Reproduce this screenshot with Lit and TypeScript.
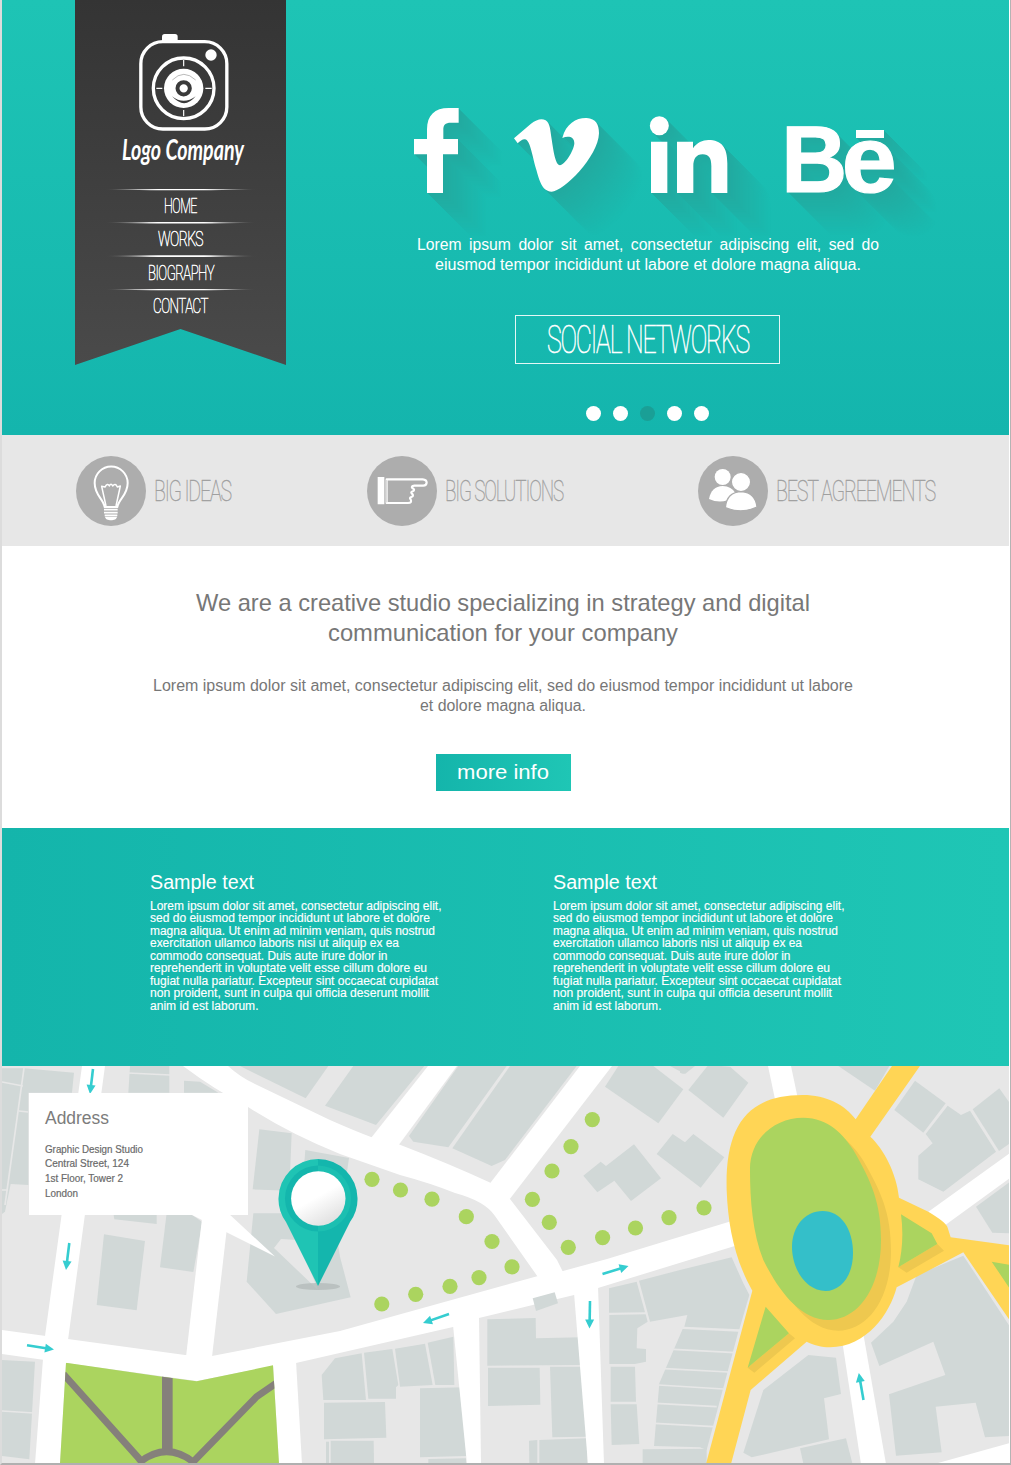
import { LitElement, html, svg, css } from "lit";
import { customElement, property } from "lit/decorators.js";

/* One line of text, fitted to a fixed measure. */
@customElement("fit-text")
class FitText extends LitElement {
  @property() text = "";
  @property({ type: Number }) w = 100;
  @property({ type: Number }) size = 16;
  @property({ type: Number }) lh = 20;
  @property({ type: Number }) ws = 0;

  static styles = css`
    :host { display: block; flex: none; line-height: 0; }
    svg { display: block; overflow: visible; }
    text { fill: currentColor; stroke: currentColor; stroke-width: var(--ink, 0); letter-spacing: var(--track, 0); }
  `;

  render() {
    return html`<svg width=${this.w} height=${this.lh}>
      <text x="0" y=${this.lh / 2 + this.size * 0.355} font-size=${this.size} word-spacing=${this.ws}
        textLength=${this.w} lengthAdjust="spacingAndGlyphs">${this.text}</text>
    </svg>`;
  }
}

const fit = (text: string, w: number, size: number, lh: number, ws = 0) =>
  html`<fit-text text=${text} w=${w} size=${size} lh=${lh} ws=${ws}></fit-text>`;

@customElement("brand-ribbon")
class BrandRibbon extends LitElement {
  static styles = css`
    :host {
      display: block; width: 211px; height: 365px; flex: none; color: #fff;
      background: linear-gradient(#343434, #4a4a4a);
      clip-path: polygon(0 0, 100% 0, 100% 100%, 50% 329px, 0 100%);
    }
    .wrap { display: flex; flex-direction: column; align-items: center; }
    .camera { display: block; margin: 33px 0 0 6px; }
    .name { font-family: Lato, sans-serif; font-style: italic; font-weight: 700; margin: 2px 0 0 4px; }
    .nav { margin-top: 21.500px; font-family: Roboto, sans-serif; font-weight: 100; --ink: 0.55px; --track: -0.04em; }
    .item { display: flex; flex-direction: column; align-items: center; height: 33.4px; width: 152px; }
    .rule { height: 2px; width: 152px; flex: none; background: linear-gradient(90deg, transparent, #fff 35%, #fff 65%, transparent); clip-path: polygon(0 40%, 30% 0, 70% 0, 100% 40%, 70% 85%, 30% 85%); }
    .label { margin-top: 2.500px; }
  `;

  render() {
    const items: [string, number][] = [["HOME", 33], ["WORKS", 45], ["BIOGRAPHY", 66], ["CONTACT", 55]];
    return html`<div class="wrap">
      <svg class="camera" width="90" height="98" viewBox="205 99 270 294">
        <g fill="none" stroke="#fff">
          <rect x="210.500" y="125" width="258" height="262" rx="66" stroke-width="10" />
          <circle cx="339" cy="265" r="91" stroke-width="10" />
          <path d="M339 180V199M339 330V349M257 265H275M404 265H423" stroke-width="3.500" />
        </g>
        <rect x="274" y="102" width="47" height="26" rx="8" fill="#fff" />
        <circle cx="421" cy="165" r="17" fill="#fff" />
        <circle cx="339" cy="265" r="59" fill="#fff" />
        <circle cx="339" cy="265" r="18.500" fill="none" stroke="#3a3a3a" stroke-width="12" />
        <path d="M304 289Q339 316 375 289Q341 330 304 289Z" fill="#3a3a3a" />
        <path d="M305 240Q339 206 375 240" fill="none" stroke="#777" stroke-width="1.500" />
      </svg>
      <div class="name">${fit("Logo Company", 122, 29, 34)}</div>
      <div class="nav">
        ${items.map(([t, w]) => html`<div class="item"><div class="rule"></div><div class="label">${fit(t, w, 21, 26)}</div></div>`)}
      </div>
    </div>`;
  }
}

@customElement("social-marks")
class SocialMarks extends LitElement {
  static styles = css`
    :host { display: block; }
    svg { display: block; overflow: visible; }
    .be { font-family: "Liberation Sans", Arial, sans-serif; font-weight: 700; }
  `;

  render() {
    const steps = 44;
    const copies = Array.from({ length: steps }, (_, i) => steps - i);
    return html`<svg width="500" height="144" viewBox="398 90 500 144">
      <defs>
        <g id="marks">
          <g transform="translate(400 90) scale(.33333)">
            <path d="M81 309V193H42V147H81V118C81 76 104 54 146 54H176V98H153C135 98 130 104 130 120V147H174V193H129V309Z" />
            <path d="M342 145L393 101C410 88 425 84 437 91C450 98 451 122 455 148C460 180 466 226 480 226C494 226 522 182 523 160C523 140 505 137 487 144C498 100 530 83 560 84C588 86 597 103 597 130C595 200 490 305 455 305C425 303 418 270 408 236C395 190 390 150 375 148C368 147 360 154 353 160Z" />
          </g>
          <g transform="translate(640 90) scale(.33333)">
            <circle cx="58" cy="107" r="28.500" />
            <path d="M33 155H82V309H33Z" />
            <path d="M111 309V155H159V175C170 158 188 150 205 150C245 150 262 172 262 220V309H214V228C214 205 207 193 188 193C168 193 160 207 160 230V309Z" />
          </g>
          <g stroke-width="1.200">
            <text class="be" x="781.300" y="191.600" font-size="95" textLength="66" lengthAdjust="spacingAndGlyphs">B</text>
            <text class="be" x="841.800" y="192" font-size="94" textLength="55" lengthAdjust="spacingAndGlyphs">e</text>
          </g>
          <path d="M856 130H884V138H856Z" />
        </g>
        <mask id="fade" maskUnits="userSpaceOnUse" x="398" y="90" width="600" height="200">
          ${copies.map((i) => {
            const v = Math.round(255 * (1 - i / steps));
            const tone = `rgb(${v},${v},${v})`;
            return svg`<use href="#marks" x=${i} y=${i} fill=${tone} />`;
          })}
        </mask>
      </defs>
      <rect x="398" y="90" width="600" height="200" fill="#22a99f" mask="url(#fade)" />
      <use href="#marks" fill="#fff" stroke="#fff" stroke-width="0" />
    </svg>`;
  }
}

const bulb = svg`<g fill="none" stroke="#fff" stroke-linejoin="round">
    <path d="M134 200C130 175 104 165 104 128A49.500 49.500 0 0 1 203 128C203 165 176 175 172 200Z" stroke-width="6" />
    <path d="M138 197L125 138L135 140Q143 127 148 137Q153 127 158 137Q166 127 172 140L181 137L168 197" stroke-width="4.500" />
    <path d="M132 208H173M132 217H173M134 225H172" stroke-width="5" />
  </g><path d="M135 229H171C170 243 136 243 135 229Z" fill="#fff" />`;

const hand = svg`<path d="M951 110H971V192H951Z" fill="#fff" />
  <path d="M978 117H1086Q1098 118 1098 127Q1097 137 1086 136H1061Q1050 137 1055 143Q1065 149 1056 153Q1048 156 1055 161Q1060 168 1052 170Q1045 173 1050 177Q1055 188 1042 188H978Z" fill="none" stroke="#fff" stroke-width="6.500" stroke-linejoin="round" />
  <path d="M978 119V186" stroke="#adadad" stroke-width="1.500" />`;

const people = svg`<g fill="#fff">
    <circle cx="128" cy="110" r="24" />
    <path d="M87 176Q94 138 128 137Q155 138 166 158L142 180Q115 189 87 176Z" />
    <circle cx="183" cy="125" r="29" stroke="#adadad" stroke-width="4" />
    <path d="M136 202Q140 155 185 154Q226 157 231 200Q184 222 136 202Z" stroke="#adadad" stroke-width="4" />
  </g>`;

@customElement("feature-item")
class FeatureItem extends LitElement {
  @property() label = "";
  @property({ type: Number }) w = 80;
  @property({ attribute: false }) art: unknown;
  @property() box = "48 47 210 210";

  static styles = css`
    :host { display: flex; align-items: center; gap: 8px; color: #a0a0a0; font-family: Roboto, sans-serif; font-weight: 100; --ink: 0.4px; --track: -0.06em; }
    .disc { display: block; background: #adadad; border-radius: 50%; flex: none; }
    .label { margin-top: -2px; }
  `;

  render() {
    return html`<svg class="disc" width="70" height="70" viewBox=${this.box}>${this.art}</svg><div class="label">${fit(this.label, this.w, 30, 34)}</div>`;
  }
}

const pts = (list: string[]) => list.map((p) => svg`<polygon points=${p} />`);

const blocksNW = [
  "6,25 72,25 222,38 216,98 85,98 85,375 32,372 15,455 6,462",
  "390,18 508,18 508,98 385,98",
  "552,62 600,65 655,98 552,98",
  "720,18 985,18 917,115",
  "778,208 875,220 868,392 758,388",
  "916,270 1047,294 1020,480 900,470",
  "340,460 470,460 470,492 343,478",
  "500,460 570,460 607,487 580,636 480,622",
  "312,523 435,543 410,751 290,735",
  "760,460 1000,460 1020,590 1052,712 828,762 740,665",
];
const blocksSW = ["6,330 105,335 88,628 6,618"];
const blocksN = [
  "70,18 283,18 138,195 -15,137",
  "385,18 530,18 355,262 250,245 237,228",
  "540,18 740,18 525,300 485,318 367,265",
  "865,18 970,18 1060,88 985,190 825,80",
  "1020,18 1095,18 1065,42",
  "760,347 812,305 828,318 912,253 993,355 903,423 853,362 802,397",
];
const blocksS = [
  "-25,375 15,325 95,310 108,450 -20,450",
  "-18,458 165,456 169,563 -18,568",
  "2,572 131,572 132,640 2,640",
  "-12,575 -3,575 -3,640 -12,640",
  "102,308 187,297 205,405 198,412 198,446 115,446",
  "195,296 285,281 308,405 210,410",
  "293,278 370,260 373,405 316,405",
  "270,415 405,412 408,618 270,622",
  "295,627 408,625 408,640 295,640",
  "472,208 617,204 618,265 755,262 760,345 472,347",
  "474,353 629,353 631,464 474,468",
  "660,350 762,350 770,560 667,562",
  "597,572 622,570 622,640 598,640",
  "628,570 770,565 772,640 628,640",
  "837,115 920,95 945,187 837,188",
  "838,195 947,193 953,215 922,235 920,295 948,297 948,335 915,342 838,342",
  "842,350 915,350 918,455 842,455",
  "842,463 920,463 928,582 845,585",
  "927,92 1050,60 1205,22 1240,100 1258,135 1228,238 1063,230 1072,195 960,215",
  "1058,237 1225,245 1130,600 1110,592 972,588 988,400",
  "938,598 1130,596 1130,640 938,640",
];
const blocksE = [
  "25,90 85,15 150,20 205,68 130,173",
  "0,18 30,18 10,42 0,38",
  "-70,282 -22,222 15,247 40,222 133,292 62,383",
  "475,18 628,18 585,92",
  "705,62 797,130 730,218 643,150",
  "803,137 843,165 870,152 948,275 790,395 715,358 715,287 758,250 737,222",
  "878,148 958,85 990,130 990,250 957,273",
  "888,440 990,365 990,520 937,518",
  "710,645 850,587 990,800 990,1128 915,1132 887,1028 767,1040 785,1177 648,1187 627,1003 796,945 760,845 598,918 573,848 640,785 680,725",
  "385,885 468,893 483,1002 432,1015 447,1138 215,1192 190,1178 250,990",
  "360,1165 498,1135 517,1210 370,1210",
];

const roads = [
  "82,1066 105,1066 68,1340 66,1363 60,1464 35,1464 43,1359 45,1336",
  "2,1330 185,1355 212,1356 340,1331 538,1276 563,1271 607,1259 735,1220 738,1245 598,1288 574,1295 479,1318 453,1327 296,1363 273,1366 197,1381 66,1363 2,1354",
  "203,1210 229,1210 212,1357 186,1357",
  "428,1066 457,1066 398,1146 371,1138",
  "580,1066 612,1066 509,1200 488,1186",
  "453,1325 479,1316 481,1464 467,1464",
  "574,1293 598,1286 604,1464 588,1464",
  "273,1364 296,1361 302,1464 279,1464",
  "768,1066 791,1066 799,1104 776,1104",
  "928,1212 1010,1153 1010,1178 944,1226",
  "842,1340 863,1332 886,1464 861,1464",
  "938,1463 1010,1443 1010,1463",
];

const trees: [number, number][] = [
  [372, 1179.3], [400.5, 1190], [432, 1199.2], [466.3, 1216.7], [492, 1241.5], [592.3, 1119.6], [571, 1146.6],
  [552, 1171], [532.4, 1199.3], [549.3, 1222.3], [568.3, 1247.3], [602.6, 1237.6], [635.5, 1228], [669, 1217.6],
  [704, 1207.8], [381.8, 1304], [415.7, 1294.3], [450, 1286.4], [479, 1277.6], [512, 1266.8],
];

const arrows: [number, number, number, number][] = [
  [93, 1069, 90, 1094], [69.3, 1243, 66, 1270], [27, 1345.2, 54, 1349.5], [449, 1314, 423, 1323],
  [602.5, 1274, 628.5, 1266], [590, 1301, 589.5, 1328.5], [863.5, 1400, 858.8, 1373],
];

const arrow = ([x1, y1, x2, y2]: [number, number, number, number]) => {
  const len = Math.hypot(x2 - x1, y2 - y1);
  const deg = (Math.atan2(y2 - y1, x2 - x1) * 180) / Math.PI;
  const shaft = `M0 0H${len - 5}`;
  const head = `M${len} 0L${len - 9} -4.500L${len - 9} 4.500Z`;
  return svg`<g transform="translate(${x1} ${y1}) rotate(${deg})">
    <path d=${shaft} stroke="#35cdd0" stroke-width="2.600" />
    <path d=${head} fill="#35cdd0" />
  </g>`;
};

const island = "M210 330C208 240 280 173 370 173C445 173 492 225 520 270C575 365 603 430 603 540C603 690 530 780 445 780C355 780 290 680 250 600C218 520 210 420 210 330Z";

@customElement("city-map")
class CityMap extends LitElement {
  static styles = css`
    :host { display: block; position: relative; height: 397px; background: #e7e7e7; overflow: hidden; }
    .canvas { display: block; }
    .card {
      position: absolute; left: 26.500px; top: 26.500px; width: 219.500px; height: 122px; box-sizing: border-box;
      padding: 13px 16.500px; background: #fff; color: #6a6a6a; display: flex; flex-direction: column; gap: 12px;
    }
    .title { color: #7c7c7c; }
    .lines { --ink: 0.2px; }
  `;

  render() {
    return html`
      <svg class="canvas" width="1007" height="397" viewBox="2 1066 1007 397">
        <defs>
          <linearGradient id="lens" x1=".3" y1=".2" x2=".75" y2="1"><stop offset=".35" stop-color="#fff" /><stop offset="1" stop-color="#dedede" /></linearGradient>
        </defs>
        <g fill="#d1d8d7">
          <g transform="translate(0 1060) scale(.33333)">${pts(blocksNW)}</g>
          <g transform="translate(0 1250) scale(.33333)">${pts(blocksSW)}</g>
          <g transform="translate(330 1060) scale(.33333)">${pts(blocksN)}</g>
          <g transform="translate(330 1250) scale(.33333)">${pts(blocksS)}</g>
          <g transform="translate(680 1060) scale(.33333)">${pts(blocksE)}</g>
        </g>
        <polygon points="274,1248 281,1239 298,1240 318,1290" fill="#e7e7e7" />
        <g fill="none" stroke="#e7e7e7" stroke-width="1.700">
          <path d="M24 1068L5 1205M2 1082L23 1086M19 1111L28 1112M2 1190L8 1190M128 1073L170 1075M2 1411L34 1413" />
          <path transform="translate(330 1250) scale(.33333)" stroke-width="5" d="M1030 298L1215 308M1005 356L1195 366M985 405L1180 417M978 460L1160 470M975 520L1150 530" />
        </g>
        <g fill="#fff">
          ${pts(roads)}
          <path d="M183 1066H228Q240 1077 255 1084L330 1120Q355 1131 371 1137L398 1144Q450 1164 491 1183L510 1199L557 1260L564 1274L540 1280L495 1216Q485 1201 455 1193Q430 1183 400 1175L340 1154Q290 1134 248 1107Q215 1090 183 1066Z" />
          <polygon points="188,1213 228,1213 275,1256.500" />
        </g>
        <polygon points="532.700,1298.300 554.700,1292.300 558,1303.300 536,1311" fill="#d1d8d7" />

        <g transform="translate(0 1250) scale(.33333)">
          <clipPath id="parkClip"><polygon points="198,338 487,380 590,394 819,346 837,640 180,640" /></clipPath>
          <g clip-path="url(#parkClip)">
            <path d="M150 300H850V640H150Z" fill="#abd45f" />
            <g fill="none" stroke="#85807b">
              <path d="M502 340V600" stroke-width="32" />
              <path d="M190 372L430 640M840 392L770 440L575 640M415 640Q500 570 585 640" stroke-width="21" />
            </g>
          </g>
        </g>

        <g transform="translate(680 1060) scale(.33333)">
          <path fill="#ffd555" d="M140 390C135 200 200 105 368 105C440 105 495 135 527 178L638 15L722 15L571 230C610 265 650 340 657 413L745 455Q795 485 802 500L812 532L990 556L990 782L850 577L650 682C630 760 560 862 450 862C425 862 400 855 380 845L212 990L153 1212L78 1212L217 692C165 600 144 500 140 390Z" />
          <g fill="#eec84f">
            <path d=${island} transform="translate(30 32)" />
            <path d="M772 552L792 572L680 638L655 622ZM327 820L345 835L223 938L203 923Z" />
          </g>
          <g fill="#abd45f">
            <path d=${island} />
            <path d="M663 463L755 520L772 552L655 622Q674 545 663 463ZM257 740L327 820L203 923ZM935 605L990 615V687Z" />
          </g>
          <path d="M336 560C336 500 375 453 428 453C482 453 519 505 519 580C519 650 480 693 437 693C380 693 336 630 336 560Z" fill="#34bfc9" />
        </g>

        <g fill="#abd45f">${trees.map(([x, y]) => svg`<circle cx=${x} cy=${y} r="7.600" />`)}</g>
        ${arrows.map(arrow)}

        <ellipse cx="318" cy="1286.500" rx="22" ry="3.500" fill="#b4bbba" opacity=".8" />
        <path d="M318 1159V1286L286 1222Q278 1211 278.500 1198A39.500 39.500 0 0 1 318 1159Z" fill="#1fc4b4" />
        <path d="M318 1159V1286L350 1222Q358 1211 357.500 1198A39.500 39.500 0 0 0 318 1159Z" fill="#14b6ad" />
        <path d="M318 1165.500A33 33 0 0 0 318 1231.500Z" fill="#14b6ad" />
        <path d="M318 1165.500A33 33 0 0 1 318 1231.500Z" fill="#1cbfb1" />
        <circle cx="318.300" cy="1198.500" r="27.200" fill="url(#lens)" />
      </svg>
      <div class="card">
        <div class="title">${fit("Address", 64, 18, 24)}</div>
        <div class="lines">
          ${fit("Graphic Design Studio", 98, 10.5, 14.7)}
          ${fit("Central Street, 124", 84, 10.5, 14.7)}
          ${fit("1st Floor, Tower 2", 78, 10.5, 14.7)}
          ${fit("London", 33, 10.5, 14.7)}
        </div>
      </div>`;
  }
}

@customElement("app-root")
class AppRoot extends LitElement {
  static styles = css`
    :host { display: block; font-family: "Liberation Sans", Arial, sans-serif; }
    .page {
      width: 1011px; height: 1465px; box-sizing: border-box; overflow: hidden; background: #fff;
      border-left: 2px solid #dcdcdc; border-right: 1px solid #b4b4b4; border-bottom: 2px solid #b0b0b0; padding-right: 1px;
    }
    .hero { display: flex; height: 435px; padding-left: 73px; box-sizing: border-box; background: linear-gradient(#1ec4b5, #14b5ad); }
    .slide { width: 500px; margin-left: 112px; padding-top: 90px; display: flex; flex-direction: column; align-items: center; color: #fff; }
    .copy { position: relative; display: flex; flex-direction: column; align-items: center; margin-left: -1px; }
    .cta {
      width: 265px; height: 49px; margin: 41px 1px 0 0; box-sizing: border-box; border: 1px solid #e4f7f5;
      display: flex; align-items: center; justify-content: center; font-family: Roboto, sans-serif; font-weight: 100;
      --ink: 0.6px; --track: -0.05em;
    }
    .dots { display: flex; gap: 12px; margin: 42px 1px 0 0; }
    .dot { width: 15px; height: 15px; border-radius: 50%; background: #fff; }
    .on { background: #1a9f96; }
    .features { display: flex; height: 110.500px; box-sizing: border-box; padding: 1px 74px 0; align-items: center; justify-content: space-between; background: #e7e7e7; }
    .intro { display: flex; flex-direction: column; align-items: center; height: 282.500px; box-sizing: border-box; padding: 41.500px 4.500px 0 0; color: #777; }
    .head, .para { display: flex; flex-direction: column; align-items: center; }
    .para { margin-top: 28px; }
    .button {
      margin-top: 39px; width: 135px; height: 37px; box-sizing: border-box; padding-bottom: 2px; display: flex; align-items: center; justify-content: center;
      color: #fff; background: linear-gradient(90deg, #14b5ab, #1fc6b5);
    }
    .columns { display: flex; height: 238px; box-sizing: border-box; padding: 42px 0 0 148px; color: #fff; background: linear-gradient(90deg, #14b5ab, #1fc6b5); }
    .column { width: 403px; display: flex; flex-direction: column; gap: 4.500px; }
    .small { --ink: 0.15px; }
  `;

  column() {
    const lines: [string, number][] = [
      ["Lorem ipsum dolor sit amet, consectetur adipiscing elit,", 291.5],
      ["sed do eiusmod tempor incididunt ut labore et dolore", 280],
      ["magna aliqua. Ut enim ad minim veniam, quis nostrud", 285],
      ["exercitation ullamco laboris nisi ut aliquip ex ea", 249],
      ["commodo consequat. Duis aute irure dolor in", 237.5],
      ["reprehenderit in voluptate velit esse cillum dolore eu", 277],
      ["fugiat nulla pariatur. Excepteur sint occaecat cupidatat", 288],
      ["non proident, sunt in culpa qui officia deserunt mollit", 279],
      ["anim id est laborum.", 108.5],
    ];
    return html`<div class="column">
      ${fit("Sample text", 104, 20, 24)}
      <div class="small">${lines.map(([t, w]) => fit(t, w, 12, 12.5))}</div>
    </div>`;
  }

  render() {
    return html`<div class="page">
      <div class="hero">
        <brand-ribbon></brand-ribbon>
        <div class="slide">
          <social-marks></social-marks>
          <div class="copy">
            ${fit("Lorem ipsum dolor sit amet, consectetur adipiscing elit, sed do", 462, 16, 20, 3.2)}
            ${fit("eiusmod tempor incididunt ut labore et dolore magna aliqua.", 426, 16, 20)}
          </div>
          <div class="cta">${fit("SOCIAL NETWORKS", 202, 38, 46)}</div>
          <div class="dots">${[0, 1, 2, 3, 4].map((i) => html`<div class="dot ${i === 2 ? "on" : ""}"></div>`)}</div>
        </div>
      </div>
      <div class="features">
        <feature-item label="BIG IDEAS" w="77" .art=${bulb}></feature-item>
        <feature-item label="BIG SOLUTIONS" w="118" .art=${hand} box="919 47 210 210"></feature-item>
        <feature-item label="BEST AGREEMENTS" w="159" .art=${people} box="54 47 210 210"></feature-item>
      </div>
      <div class="intro">
        <div class="head">
          ${fit("We are a creative studio specializing in strategy and digital", 614, 24, 30)}
          ${fit("communication for your company", 350, 24, 30)}
        </div>
        <div class="para">
          ${fit("Lorem ipsum dolor sit amet, consectetur adipiscing elit, sed do eiusmod tempor incididunt ut labore", 700, 16, 20)}
          ${fit("et dolore magna aliqua.", 166, 16, 20)}
        </div>
        <div class="button">${fit("more info", 92, 21, 34)}</div>
      </div>
      <div class="columns">${this.column()}${this.column()}</div>
      <city-map></city-map>
    </div>`;
  }
}
